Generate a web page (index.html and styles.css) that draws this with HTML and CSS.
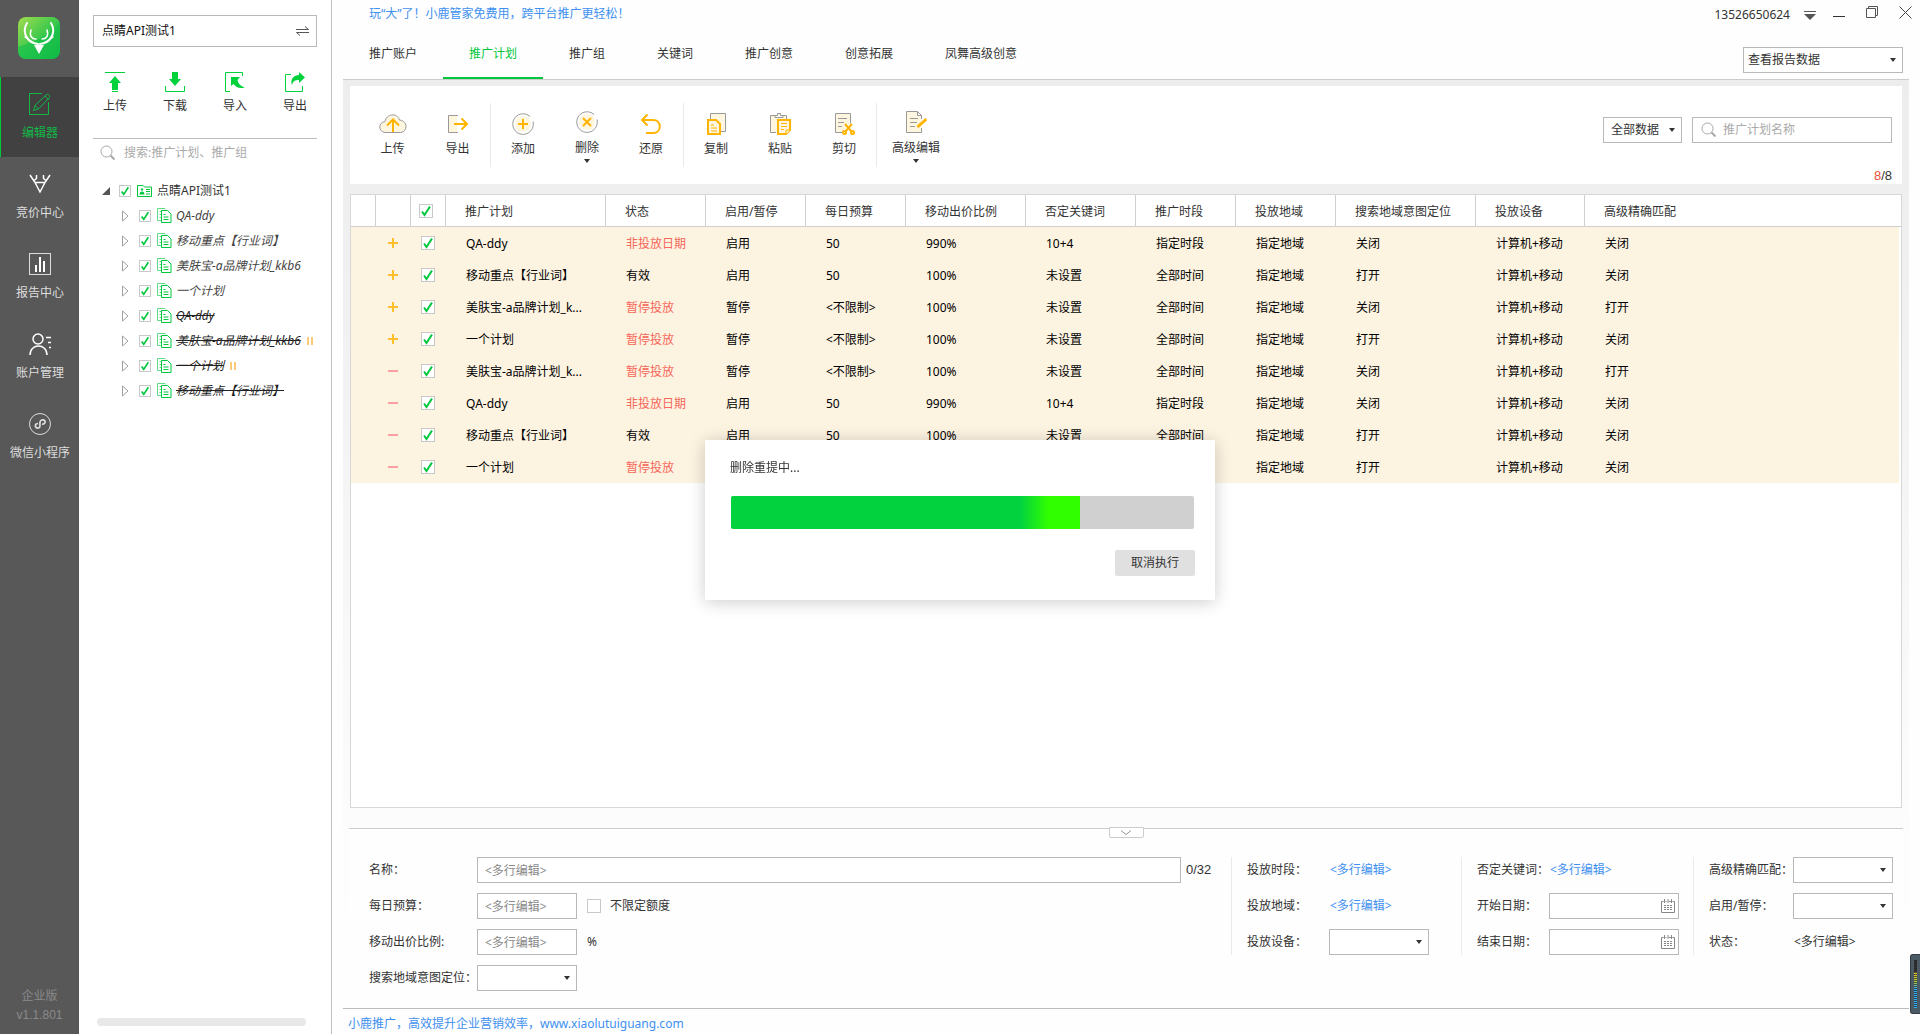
FILE: index.html
```html
<!DOCTYPE html>
<html lang="zh-CN">
<head>
<meta charset="utf-8">
<title>推广计划</title>
<link rel="stylesheet" href="styles.css">
</head>
<body>
<svg class="sprite" aria-hidden="true">
  <symbol id="i-plan" viewBox="0 0 15 15">
    <path d="M4 12.5H.5V.5h7.500l1 1" fill="none" stroke="#5fdc88"/><path d="M2.500 3.500h3M2.500 6.500h1.500M2.500 9.500h1.500" stroke="#5fdc88"/>
    <path d="M4.500 2.500h6l3.500 3.500v8.500H4.500z" fill="#fff" stroke="#00c73c"/><path d="M6.500 6.500h2M6.500 9h5M6.500 11.500h5" stroke="#00c73c"/>
  </symbol>
  <symbol id="i-closed" viewBox="0 0 7 12"><path d="M.5 1v10L6 6z" fill="#fff" stroke="#a0a0a0"/></symbol>
  <symbol id="i-search" viewBox="0 0 16 16"><circle cx="6.500" cy="6.500" r="5.500" fill="none" stroke="#a8a8a8"/><path d="M10.500 10.500l4 4" stroke="#a8a8a8" stroke-width="2"/></symbol>
  <symbol id="i-pause" viewBox="0 0 6 8"><path d="M1 0v8M5 0v8" stroke="#fcc978" stroke-width="2"/></symbol>
  <symbol id="i-caret" viewBox="0 0 6 4"><path d="M0 0h6L3 4z" fill="#333"/></symbol>
  <symbol id="i-cal" viewBox="0 0 14 15"><path d="M2.500 2.500H.5v11h13v-11h-2M4.500 2.500h1M8 2.500h2" fill="none" stroke="#888"/><path d="M3.500 0v4M10.500 0v4M7 0v4" stroke="#888"/><path d="M3 6.500h8M3 8.500h8M3 10.500h8" stroke="#888" stroke-dasharray="2 1"/></symbol>
</svg>
<div class="app">
  <nav class="rail">
    <svg class="logo" viewBox="0 0 42 42">
      <linearGradient id="logo-bg" x1="0" y1="0" x2="1" y2="1">
        <stop offset="0" stop-color="#a4dc4e"/><stop offset=".5" stop-color="#3cc94c"/><stop offset="1" stop-color="#0fb541"/>
      </linearGradient>
      <rect width="42" height="42" rx="8" fill="url(#logo-bg)"/>
      <path d="M0 30C12 25 26 24 42 5v29a8 8 0 0 1-8 8H8a8 8 0 0 1-8-8z" fill="#0fc04a" opacity=".55"/>
      <g fill="none" stroke="#fff" stroke-width="2" stroke-linecap="round">
        <path d="M9 6C3 16 10 26 20 27M33 6c6 10-1 20-11 21"/>
        <path d="M13 13c-2 6 1 9 5 9M29 13c2 6-1 9-5 9M7 20l4 3M35 20l-4 3" stroke-width="1.500"/>
      </g>
      <path d="M16 28h10l-5 9z" fill="#fff"/>
    </svg>
    <a class="rail-item active" href="#">
      <svg width="22" height="22" viewBox="0 0 22 22" fill="none" stroke="currentColor"><path d="M13 .5H.5v21h19V9"/><path d="M4.500 17.500l1.500-5L17.500 1.500c2-1 4 1 3 3L9.500 16zM6 12.500l3.500 3.500M16 3l3.500 3.500"/></svg>
      <span>编辑器</span>
    </a>
    <a class="rail-item" href="#">
      <svg width="22" height="22" viewBox="0 0 22 22" fill="none" stroke="#fff" stroke-width="1.500"><path d="M1 2l5 7.500h10L21 2M7.500 2v3.500L5 7.500M14.500 2v3.500L17 7.500M6 9.500L11 19l5-9.500"/></svg>
      <span>竞价中心</span>
    </a>
    <a class="rail-item" href="#">
      <svg width="22" height="22" viewBox="0 0 22 22" fill="none" stroke="#ddd"><rect x=".5" y=".5" width="21" height="21"/><path d="M7 12v7M11 4v15M15 8v11" stroke="#fff" stroke-width="2"/></svg>
      <span>报告中心</span>
    </a>
    <a class="rail-item" href="#">
      <svg width="22" height="22" viewBox="0 0 22 22" fill="none" stroke="#fff" stroke-width="1.500"><circle cx="9" cy="6" r="5"/><path d="M1 22c0-12 17-12 17 0M17 4.500h5M19 9.500h3M20 14.500h2"/></svg>
      <span>账户管理</span>
    </a>
    <a class="rail-item" href="#">
      <svg width="22" height="22" viewBox="0 0 22 22" fill="none" stroke="#ddd"><circle cx="11" cy="11" r="10.500"/><path d="M9 10.500c-4 0-3 5 0 4.500 3 0 1.500-3.500 2-5.500.3-4 6-3 5 0-.3 1-1.500 2-3 1.500" stroke-width="1.700"/></svg>
      <span>微信小程序</span>
    </a>
    <footer class="edition"><span>企业版</span><span class="arial">v1.1.801</span></footer>
  </nav>

  <aside class="side">
    <button class="account" type="button"><span>点睛API测试1</span>
      <svg width="13" height="10" viewBox="0 0 13 10" fill="none" stroke="#555"><path d="M0 3.500h12.500L9 .5M13 6.500H.5L4 9.500"/></svg>
    </button>
    <div class="quick">
      <button type="button"><svg width="20" height="20" viewBox="0 0 20 20" fill="#00d23c"><path d="M0 0h20v1H0zM10 4l6 7h-3v7H7v-7H4zM7 19h6v1H7z"/></svg>上传</button>
      <button type="button"><svg width="20" height="20" viewBox="0 0 20 20" fill="#00d23c"><path d="M7 0h6v7h3l-6 7-6-7h3z"/><path d="M.5 14v5.500h19V14" fill="none" stroke="#00d23c"/></svg>下载</button>
      <button type="button"><svg width="20" height="20" viewBox="0 0 20 20" fill="#00d23c"><path d="M17.500 4V.5H.5v19H5" fill="none" stroke="#00d23c"/><path d="M6 5h9l-2.500 3c1 4 3 6 7.500 7.500-6 1.500-9.500-.5-11.500-3.500L6 14z"/></svg>导入</button>
      <button type="button"><svg width="20" height="20" viewBox="0 0 20 20" fill="#00d23c"><path d="M6 2.500H.5v17h17V14" fill="none" stroke="#00d23c"/><path d="M14 0l6 5.500-6 5.500V8c-4 0-6 1-7 5-2-5 1-9.500 7-10z"/></svg>导出</button>
    </div>
    <label class="tree-search"><svg width="16" height="16"><use href="#i-search"/></svg><input type="text" aria-label="搜索" placeholder="搜索:推广计划、推广组"></label>
    <ul class="tree">
      <li class="root"><svg width="8" height="8" viewBox="0 0 8 8"><path d="M8 0v8H0z" fill="#555"/></svg><input type="checkbox" class="small" aria-label="点睛API测试1" checked>
        <svg width="15" height="12" viewBox="0 0 15 12"><path d="M.5 11.500V.5H6L7.500 2h7v9.500z" fill="none" stroke="#00c73c"/><path d="M5 3l1.500 1.500L5 6 3.500 4.500zM2.500 9.500c0-4 5-4 5 0zM9 4h4v1H9zM9 6h4v1H9zM9 8.500h4v1H9z" fill="#00c73c"/></svg><span>点睛API测试1</span></li>
      <li><svg width="7" height="12"><use href="#i-closed"/></svg><input type="checkbox" class="small" aria-label="QA-ddy" checked><svg width="15" height="15"><use href="#i-plan"/></svg><em>QA-ddy</em></li>
      <li><svg width="7" height="12"><use href="#i-closed"/></svg><input type="checkbox" class="small" aria-label="移动重点" checked><svg width="15" height="15"><use href="#i-plan"/></svg><em>移动重点【行业词】</em></li>
      <li><svg width="7" height="12"><use href="#i-closed"/></svg><input type="checkbox" class="small" aria-label="美肤宝" checked><svg width="15" height="15"><use href="#i-plan"/></svg><em>美肤宝-a品牌计划_kkb6</em></li>
      <li><svg width="7" height="12"><use href="#i-closed"/></svg><input type="checkbox" class="small" aria-label="一个计划" checked><svg width="15" height="15"><use href="#i-plan"/></svg><em>一个计划</em></li>
      <li><svg width="7" height="12"><use href="#i-closed"/></svg><input type="checkbox" class="small" aria-label="QA-ddy" checked><svg width="15" height="15"><use href="#i-plan"/></svg><em class="gone">QA-ddy</em></li>
      <li><svg width="7" height="12"><use href="#i-closed"/></svg><input type="checkbox" class="small" aria-label="美肤宝" checked><svg width="15" height="15"><use href="#i-plan"/></svg><em class="gone">美肤宝-a品牌计划_kkb6</em><svg class="pause" width="6" height="8"><use href="#i-pause"/></svg></li>
      <li><svg width="7" height="12"><use href="#i-closed"/></svg><input type="checkbox" class="small" aria-label="一个计划" checked><svg width="15" height="15"><use href="#i-plan"/></svg><em class="gone">一个计划</em><svg class="pause" width="6" height="8"><use href="#i-pause"/></svg></li>
      <li><svg width="7" height="12"><use href="#i-closed"/></svg><input type="checkbox" class="small" aria-label="移动重点" checked><svg width="15" height="15"><use href="#i-plan"/></svg><em class="gone">移动重点【行业词】</em></li>
    </ul>
    <div class="side-scroll"></div>
  </aside>

  <main class="main">
    <header class="top">
      <div class="top-left">
        <a class="promo" href="#">玩“大”了！小鹿管家免费用，跨平台推广更轻松！</a>
        <nav class="tabs">
          <a href="#">推广账户</a><a href="#" class="on">推广计划</a><a href="#">推广组</a><a href="#">关键词</a><a href="#">推广创意</a><a href="#">创意拓展</a><a href="#">凤舞高级创意</a>
        </nav>
      </div>
      <div class="top-right">
        <div class="window">
          <span class="phone">13526650624</span>
          <button type="button" aria-label="菜单"><svg width="12" height="12" viewBox="0 0 12 12"><path d="M0 2.500h12" stroke="#555"/><path d="M0 5h12l-6 6z" fill="#555"/></svg></button>
          <button type="button" aria-label="最小化"><svg width="12" height="12" viewBox="0 0 12 12"><path d="M0 7.500h12" stroke="#333"/></svg></button>
          <button type="button" class="raised" aria-label="还原窗口"><svg width="12" height="12" viewBox="0 0 12 12" fill="none" stroke="#555"><path d="M.5 2.500h9v9h-9zM2.500 2V.5h9v9H10"/></svg></button>
          <button type="button" class="raised" aria-label="关闭"><svg width="13" height="13" viewBox="0 0 13 13" stroke="#444"><path d="M.5.5l12 12M12.500.5l-12 12"/></svg></button>
        </div>
        <select class="report" aria-label="报告"><option>查看报告数据</option></select>
      </div>
    </header>

    <section class="work">
      <div class="toolbar">
        <div class="tools transfer">
          <button type="button"><svg width="28" height="22" viewBox="0 0 28 22" fill="#fff6e0" stroke="#999"><path d="M6 19.500c-7-1-7-10 0-11C7 1 18-1 20.500 7c9 1 8 12 1 12.500z"/><path d="M14 19V7M8 12.500l6-6 6 6" fill="none" stroke="#ffb400" stroke-width="2"/></svg>上传</button>
          <button type="button"><svg width="22" height="22" viewBox="0 0 22 22" fill="none"><path d="M2 3h8v16H2z" fill="#fff6e0"/><path d="M11 2.500H1.500v17H11" stroke="#999"/><path d="M7 11h13M14.500 5.500L20 11l-5.500 5.500" stroke="#ffb400" stroke-width="2"/></svg>导出</button>
        </div>
        <div class="tools">
          <button type="button"><svg width="22" height="22" viewBox="0 0 22 22" fill="none"><circle cx="11" cy="11" r="8" fill="#fff6e0"/><path d="M18 3.500a10.300 10.300 0 1 0 3 5" stroke="#999"/><path d="M11 6v10M6 11h10" stroke="#ffb400" stroke-width="2"/></svg>添加</button>
          <button type="button" class="more"><svg width="22" height="22" viewBox="0 0 22 22" fill="none"><circle cx="11" cy="11" r="8" fill="#fff6e0"/><path d="M18 3.500a10.300 10.300 0 1 0 3 5" stroke="#999"/><path d="M7 7l8 8M15 7l-8 8" stroke="#ffb400" stroke-width="2"/></svg>删除<svg class="caret" width="6" height="4"><use href="#i-caret"/></svg></button>
          <button type="button"><svg width="22" height="22" viewBox="0 0 22 22" fill="none" stroke="#ffb400" stroke-width="2"><path d="M7.500 1.500L2 7l5.500 5.500M2 7h11c9 0 9 13 0 13H6"/></svg>还原</button>
        </div>
        <div class="tools">
          <button type="button"><svg width="22" height="22" viewBox="0 0 22 22" fill="#fff6e0"><path d="M5.500 7V.5h15v18H14" stroke="#999"/><path d="M3 7h8l4 4v10H3z" stroke="#ffb400" stroke-width="2"/><path d="M6 12h3M6 15h6M6 18h6" stroke="#ffb400"/></svg>复制</button>
          <button type="button"><svg width="22" height="22" viewBox="0 0 22 22" fill="#fff6e0"><path d="M7 19.500H1.500v-17H6v2h8v-2h3.500V6M6 2.500h2.500v-2h3v2H14" stroke="#999"/><path d="M9 7h12v10l-4 4H9z" stroke="#ffb400" stroke-width="2"/><path d="M12 10.500h6M12 13.500h6M12 16.500h3M17 21v-4h4" stroke="#ffb400"/></svg>粘贴</button>
          <button type="button"><svg width="22" height="22" viewBox="0 0 22 22" fill="#fff6e0"><path d="M10 19.500H2.500V.5h15v10" stroke="#999"/><path d="M5 5.500h9M5 9.500h6M5 13.500h4" stroke="#999"/><g fill="none" stroke="#ffb400" stroke-width="2"><path d="M12 11l7 8M19 11l-7 8"/><circle cx="11.500" cy="19.500" r="1.500"/><circle cx="19.500" cy="19.500" r="1.500"/></g></svg>剪切</button>
        </div>
        <div class="tools wide">
          <button type="button" class="more"><svg width="22" height="22" viewBox="0 0 22 22" fill="#fff6e0"><path d="M16.500 17v4.500H1.500V.5h11l4 4V8M12.500.5v4h4" stroke="#999"/><path d="M5 7.500h8M5 11.500h7M5 15.500h5" stroke="#999"/><path d="M12.500 16l9-8" stroke="#ffb400" stroke-width="3"/></svg>高级编辑<svg class="caret" width="6" height="4"><use href="#i-caret"/></svg></button>
        </div>
        <div class="filters">
          <div class="filter-row">
            <select class="scope" aria-label="数据范围"><option>全部数据</option></select>
            <label class="find"><svg width="16" height="16"><use href="#i-search"/></svg><input type="text" aria-label="推广计划名称" placeholder="推广计划名称"></label>
          </div>
          <div class="count arial"><b>8</b>/8</div>
        </div>
      </div>

      <div class="grid">
        <table>
          <colgroup><col class="w25"><col class="w35"><col class="w35"><col class="w160"><col class="w100"><col class="w100"><col class="w100"><col class="w120"><col class="w110"><col class="w100"><col class="w100"><col class="w140"><col class="w109"><col></colgroup>
          <thead><tr><th></th><th></th><th class="tick"><input type="checkbox" aria-label="全选" checked></th><th>推广计划</th><th>状态</th><th>启用/暂停</th><th>每日预算</th><th>移动出价比例</th><th>否定关键词</th><th>推广时段</th><th>投放地域</th><th>搜索地域意图定位</th><th>投放设备</th><th>高级精确匹配</th></tr></thead>
          <tbody>
            <tr><td></td><td class="mark plus"></td><td class="tick"><input type="checkbox" aria-label="选择" checked></td><td>QA-ddy</td><td class="bad">非投放日期</td><td>启用</td><td>50</td><td>990%</td><td>10+4</td><td>指定时段</td><td>指定地域</td><td>关闭</td><td>计算机+移动</td><td>关闭</td></tr>
            <tr><td></td><td class="mark plus"></td><td class="tick"><input type="checkbox" aria-label="选择" checked></td><td>移动重点【行业词】</td><td>有效</td><td>启用</td><td>50</td><td>100%</td><td>未设置</td><td>全部时间</td><td>指定地域</td><td>打开</td><td>计算机+移动</td><td>关闭</td></tr>
            <tr><td></td><td class="mark plus"></td><td class="tick"><input type="checkbox" aria-label="选择" checked></td><td>美肤宝-a品牌计划_k...</td><td class="bad">暂停投放</td><td>暂停</td><td>&lt;不限制&gt;</td><td>100%</td><td>未设置</td><td>全部时间</td><td>指定地域</td><td>关闭</td><td>计算机+移动</td><td>打开</td></tr>
            <tr><td></td><td class="mark plus"></td><td class="tick"><input type="checkbox" aria-label="选择" checked></td><td>一个计划</td><td class="bad">暂停投放</td><td>暂停</td><td>&lt;不限制&gt;</td><td>100%</td><td>未设置</td><td>全部时间</td><td>指定地域</td><td>打开</td><td>计算机+移动</td><td>关闭</td></tr>
            <tr><td></td><td class="mark minus"></td><td class="tick"><input type="checkbox" aria-label="选择" checked></td><td>美肤宝-a品牌计划_k...</td><td class="bad">暂停投放</td><td>暂停</td><td>&lt;不限制&gt;</td><td>100%</td><td>未设置</td><td>全部时间</td><td>指定地域</td><td>关闭</td><td>计算机+移动</td><td>打开</td></tr>
            <tr><td></td><td class="mark minus"></td><td class="tick"><input type="checkbox" aria-label="选择" checked></td><td>QA-ddy</td><td class="bad">非投放日期</td><td>启用</td><td>50</td><td>990%</td><td>10+4</td><td>指定时段</td><td>指定地域</td><td>关闭</td><td>计算机+移动</td><td>关闭</td></tr>
            <tr><td></td><td class="mark minus"></td><td class="tick"><input type="checkbox" aria-label="选择" checked></td><td>移动重点【行业词】</td><td>有效</td><td>启用</td><td>50</td><td>100%</td><td>未设置</td><td>全部时间</td><td>指定地域</td><td>打开</td><td>计算机+移动</td><td>关闭</td></tr>
            <tr><td></td><td class="mark minus"></td><td class="tick"><input type="checkbox" aria-label="选择" checked></td><td>一个计划</td><td class="bad">暂停投放</td><td>暂停</td><td>&lt;不限制&gt;</td><td>100%</td><td>未设置</td><td>全部时间</td><td>指定地域</td><td>打开</td><td>计算机+移动</td><td>关闭</td></tr>
          </tbody>
        </table>
      </div>

      <div class="detail">
        <button class="fold" type="button" aria-label="收起"><svg width="10" height="5" viewBox="0 0 10 5" fill="none" stroke="#999"><path d="M0 .5l5 4 5-4"/></svg></button>
        <div class="form">
          <div class="fields name-fields">
            <div class="field"><label for="f-name">名称：</label><input id="f-name" class="grow" type="text" placeholder="&lt;多行编辑&gt;"><span class="arial">0/32</span></div>
            <div class="field"><label for="f-budget">每日预算：</label><input id="f-budget" type="text" placeholder="&lt;多行编辑&gt;"><label class="nolimit"><input type="checkbox">不限定额度</label></div>
            <div class="field"><label for="f-ratio">移动出价比例:</label><input id="f-ratio" type="text" placeholder="&lt;多行编辑&gt;"><span class="unit">%</span></div>
            <div class="field"><label for="f-region">搜索地域意图定位：</label><select id="f-region"><option></option></select></div>
          </div>
          <div class="fields g2">
            <div class="field"><span class="lab">投放时段：</span><a href="#">&lt;多行编辑&gt;</a></div>
            <div class="field"><span class="lab">投放地域：</span><a href="#">&lt;多行编辑&gt;</a></div>
            <div class="field"><label class="lab" for="f-dev">投放设备：</label><select id="f-dev"><option></option></select></div>
          </div>
          <div class="fields g3">
            <div class="field"><span class="lab">否定关键词：</span><a href="#">&lt;多行编辑&gt;</a></div>
            <div class="field"><label class="lab" for="f-start">开始日期：</label><span class="date"><input id="f-start" type="text"><svg width="14" height="15"><use href="#i-cal"/></svg></span></div>
            <div class="field"><label class="lab" for="f-end">结束日期：</label><span class="date"><input id="f-end" type="text"><svg width="14" height="15"><use href="#i-cal"/></svg></span></div>
          </div>
          <div class="fields g4">
            <div class="field"><label class="lab" for="f-match">高级精确匹配：</label><select id="f-match"><option></option></select></div>
            <div class="field"><label class="lab" for="f-on">启用/暂停：</label><select id="f-on"><option></option></select></div>
            <div class="field"><span class="lab">状态：</span><span class="state">&lt;多行编辑&gt;</span></div>
          </div>
        </div>
      </div>
    </section>
    <footer class="foot"><a href="#">小鹿推广，高效提升企业营销效率，www.xiaolutuiguang.com</a></footer>
  </main>
</div>

<div class="overlay">
  <div class="dialog" role="dialog" aria-label="删除重提中">
    <p>删除重提中...</p>
    <div class="bar"><div class="fill" style="width:75.4%"></div></div>
    <button type="button">取消执行</button>
  </div>
</div>
<div class="meter"><i></i></div>
</body>
</html>
```
FILE: styles.css
```css
* { box-sizing: border-box; }
body {
  margin: 0;
  color: #333;
  background: #fefefe;
  font: 12px/16px "Noto Sans", "Noto Sans CJK SC", sans-serif;
}
button, input, select { font: inherit; color: inherit; margin: 0; padding: 0; border: 0; background: none; border-radius: 0; }
a { color: #4090f0; text-decoration: none; }
svg { display: block; flex: none; }
.sprite { display: none; }
.arial { font-family: "Liberation Sans", sans-serif; }
::placeholder { color: #888; opacity: 1; }

input[type="checkbox"] {
  appearance: none;
  flex: none;
  display: block;
  width: 14px;
  height: 14px;
  border: 1px solid #c8c8c8;
  background: #fff;
}
input[type="checkbox"].small { width: 12px; height: 12px; }
input[type="checkbox"]:checked {
  background: #fff url("data:image/svg+xml,%3Csvg xmlns='http://www.w3.org/2000/svg' viewBox='0 0 12 12'%3E%3Cpath d='M2 6.500L4.500 10 10 1.500' fill='none' stroke='%2300c73c' stroke-width='2'/%3E%3C/svg%3E") center / 100% 100% no-repeat;
}
select {
  appearance: none;
  height: 26px;
  width: 100px;
  padding-left: 4px;
  border: 1px solid #b9b9b9;
  background: #fff url("data:image/svg+xml,%3Csvg xmlns='http://www.w3.org/2000/svg' width='6' height='4'%3E%3Cpath d='M0 0h6L3 4z' fill='%23333'/%3E%3C/svg%3E") right 6px center no-repeat;
}

.app { display: flex; min-height: 100vh; }

/* dark navigation rail */
.rail { flex: none; width: 79px; display: flex; flex-direction: column; background: #585858; color: #ddd; }
.logo { width: 42px; height: 42px; margin: 17px 0 18px 18px; }
.rail-item { height: 80px; padding-top: 16px; display: flex; flex-direction: column; align-items: center; gap: 10px; color: #ddd; border-left: 1px solid transparent; }
.rail-item.active { color: #12b846; background: #414141; border-left-color: #00c73c; }
.edition { margin-top: auto; padding-bottom: 11px; display: flex; flex-direction: column; align-items: center; gap: 3px; color: #8a8a8a; }

/* account tree */
.side { flex: none; width: 253px; padding: 15px 14px 8px; display: flex; flex-direction: column; border-right: 1px solid #c0c0c0; background: #fff; }
.account { height: 32px; padding: 0 7px 0 8px; display: flex; align-items: center; justify-content: space-between; border: 1px solid #b9b9b9; color: #111; }
.quick { height: 92px; padding: 25px 10px 0; display: flex; justify-content: space-between; align-items: flex-start; border-bottom: 1px solid #bbb; }
.quick button { width: 24px; display: flex; flex-direction: column; align-items: center; gap: 6px; }
.tree-search { height: 28px; padding-left: 7px; display: flex; align-items: center; gap: 8px; }
.tree-search input { flex: 1; min-width: 0; outline: 0; }
.tree-search ::placeholder, .find ::placeholder { color: #aaa; }
.tree { list-style: none; margin: 11px 0 0; padding: 0; overflow: hidden; }
.tree li { height: 25px; padding-left: 29px; display: flex; align-items: center; white-space: nowrap; }
.tree .root { padding-left: 9px; }
.tree input { margin: 0 6px 0 10px; }
.tree .root input { margin-left: 9px; }
.tree em, .tree span { margin-left: 4px; }
.tree span { margin-left: 5px; }
.tree em { color: #444; }
.tree .gone { text-decoration: line-through; color: #222; }
.pause { margin-left: 6px; }
.side-scroll { height: 8px; margin: auto 11px 0 4px; border-radius: 4px; background: #e8e8e8; }

/* header */
.main { flex: 1; min-width: 0; display: flex; flex-direction: column; padding: 0 11px; }
.top { height: 80px; display: flex; justify-content: space-between; border-bottom: 1px solid #ccc; }
.top-left { display: flex; flex-direction: column; justify-content: space-between; }
.promo { padding: 6px 26px 0; }
.tabs { display: flex; }
.tabs a { height: 52px; padding: 19px 26px 0; color: #333; border-bottom: 2px solid transparent; }
.tabs .on { color: #00c73c; border-color: #00c73c; }
.top-right { display: flex; flex-direction: column; align-items: flex-end; gap: 17px; }
.window { height: 30px; display: flex; align-items: center; margin-right: -3px; }
.window button { margin-left: 20px; }
.window .phone + button { margin-left: 14px; }
.window button + button { margin-left: 17px; }
.window .raised { padding-bottom: 6px; }
.window button + .raised { margin-left: 21px; }
.report { width: 160px; margin-right: 6px; }

/* work area */
.work { flex: 1; display: flex; flex-direction: column; padding: 6px 6px 0 7px; background: linear-gradient(#ededed, #f0f0f0 20%, #fdfdfd 85%, #fefefe); }
.toolbar { height: 98px; padding: 17px 10px 0 10px; display: flex; background: #fff; margin-right: 1px; }
.tools { height: 64px; display: flex; border-right: 1px solid #eaeaea; }
.tools.wide { border: 0; }
.tools button { width: 64px; padding-top: 10px; display: flex; flex-direction: column; align-items: center; justify-content: flex-start; gap: 6px; }
.tools.transfer button { width: 65px; }
.tools .more { padding-top: 8px; gap: 7px; }
.tools.wide button { width: 78px; }
.caret { margin-top: -4px; }
.filters { margin-left: auto; padding-top: 14px; display: flex; flex-direction: column; align-items: flex-end; justify-content: space-between; height: 81px; }
.filter-row { display: flex; gap: 10px; }
.scope { width: 79px; padding-left: 7px; }
.find { width: 200px; height: 26px; padding-left: 8px; display: flex; align-items: center; gap: 6px; border: 1px solid #b9b9b9; }
.find input { flex: 1; min-width: 0; outline: 0; }
.count { font-size: 13px; }
.count b { font-weight: 400; color: #e8503a; }

.grid { flex: 1; min-height: 400px; margin-top: 10px; border: 1px solid #d7d7d7; background: #fff; margin-right: 1px; }
table { width: 100%; table-layout: fixed; border-spacing: 0; }
.w25 { width: 25px; } .w35 { width: 35px; } .w100 { width: 100px; } .w109 { width: 109px; } .w110 { width: 110px; }
.w120 { width: 120px; } .w140 { width: 140px; } .w160 { width: 160px; }
th { height: 32px; padding: 2px 0 0 19px; text-align: left; font-weight: 400; white-space: nowrap; border-right: 1px solid #d0d0d0; border-bottom: 1px solid #d0d0d0; }
th:last-child { border-right: 0; }
td { height: 32px; padding: 2px 0 0 20px; background: #fdf3e1; color: #000; white-space: nowrap; }
td:last-child { border-right: 2px solid #fff; }
td.bad { color: #f5675a; }
th.tick { padding: 0 0 0 8px; }
td.tick { padding: 0 0 0 10px; }
.mark { padding: 0; background: linear-gradient(#fcc02e, #fcc02e) 12px center / 10px 2px no-repeat, linear-gradient(#fcc02e, #fcc02e) 16px center / 2px 10px no-repeat, #fdf3e1; }
.mark.minus { background: linear-gradient(#fba0a0, #fba0a0) 12px center / 10px 2px no-repeat, #fdf3e1; }

/* detail form */
.detail { margin-top: 20px; border-top: 1px solid #ccc; background: #fefefe; margin-left: -1px; }
.fold { width: 35px; height: 11px; margin: -2px auto 0; display: flex; align-items: center; justify-content: center; border: 1px solid #ccc; border-radius: 0 0 2px 2px; background: #fff; }
.form { display: flex; align-items: flex-start; padding: 19px 10px 17px 20px; }
.fields { display: flex; flex-direction: column; gap: 10px; }
.name-fields { flex: 1; padding-right: 14px; }
.name-fields .field > label:first-child { width: 108px; }
.field { display: flex; align-items: center; height: 26px; white-space: nowrap; }
.field input[type="text"] { width: 100px; height: 26px; padding-left: 7px; border: 1px solid #b9b9b9; background: #fff; }
.field .grow { flex: 1; }
.field .arial { width: 31px; margin-left: 5px; font-size: 13px; }
.nolimit { margin-left: 10px; display: flex; align-items: center; gap: 9px; }
.unit { margin-left: 10px; }
.g2, .g3, .g4 { padding-left: 15px; border-left: 1px solid #eaeaea; }
.g2 { width: 230px; }
.g3 { width: 232px; }
.g2 .lab { width: 82px; }
.g3 .lab { width: 72px; }
.g4 .lab { width: 84px; }
.field a, .state { margin-left: 1px; }
.date { display: grid; align-items: center; }
.date > * { grid-area: 1 / 1; }
.field .date input { width: 130px; }
.date svg { justify-self: end; margin-right: 4px; }
.foot { height: 26px; padding: 7px 5px 0; border-top: 1px solid #bbb; }

/* progress dialog */
.overlay { position: fixed; inset: 0; padding-top: 6px; display: flex; align-items: center; justify-content: center; }
.dialog { width: 510px; height: 160px; padding: 20px 20px 0 25px; display: flex; flex-direction: column; background: #fff; box-shadow: 0 2px 16px rgba(0, 0, 0, .2); }
.dialog p { margin: 0 0 20px; }
.bar { height: 33px; margin: 0 1px 21px; border-radius: 2px; background: #d0d0d0; overflow: hidden; }
.fill { height: 100%; background: linear-gradient(90deg, #03d23f 83%, #30ff00 91%); }
.dialog button { align-self: flex-end; width: 80px; height: 26px; border-radius: 2px; background: #e0e0e0; }

/* desktop level meter at the window edge */
.meter { position: fixed; right: 0; bottom: 20px; width: 10px; height: 60px; padding: 5px 3px; border: 1px solid #333c44; border-right: 0; border-radius: 3px 0 0 3px; background: #4c5a66; }
.meter i { display: block; height: 100%; background: repeating-linear-gradient(#222b 0 1px, transparent 1px 2px), linear-gradient(#333 25%, #e8c030 25%, #b8d040 45%, #30b0f0 60%); }
```
